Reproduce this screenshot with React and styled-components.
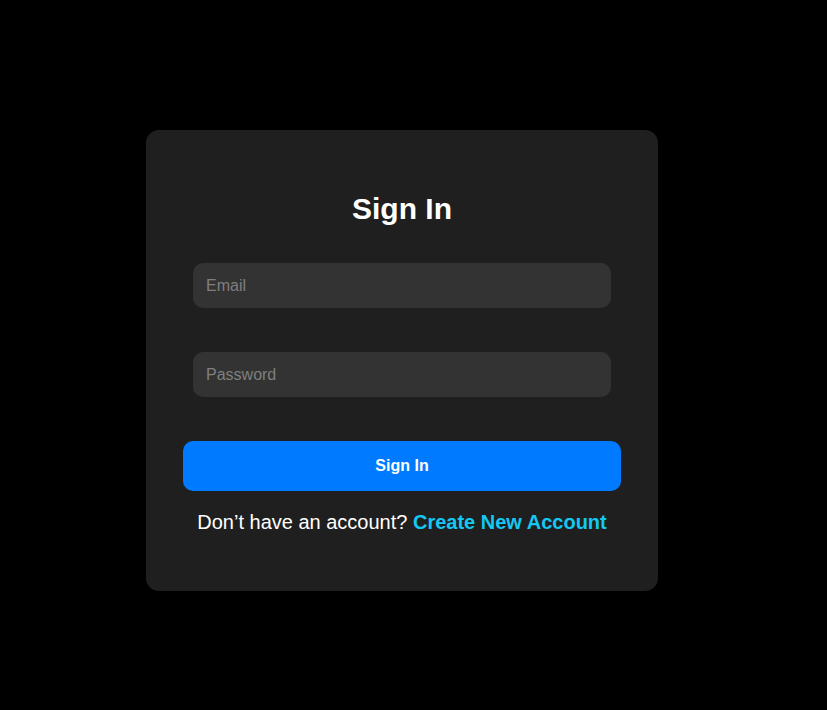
import React from "react";
import styled, { createGlobalStyle } from "styled-components";

const GlobalStyle = createGlobalStyle`
  html, body {
    margin: 0;
    padding: 0;
    background: #000;
    font-family: "Liberation Sans", Arial, sans-serif;
  }
`;

const Page = styled.div`
  min-height: 710px;
  box-sizing: border-box;
  padding: 130px 0 0 146px;
`;

const Card = styled.div`
  width: 512px;
  box-sizing: border-box;
  background: #1f1f1f;
  border-radius: 13px;
  padding: 40px 37px 57px;
`;

const Title = styled.h2`
  margin: 22px 0 37px;
  color: #fff;
  font-size: 30px;
  font-weight: 700;
  text-align: center;
  line-height: 34px;
`;

const Form = styled.form`
  display: flex;
  flex-direction: column;
  gap: 44px;
`;

const Input = styled.input`
  margin: 0 10px;
  height: 45px;
  box-sizing: border-box;
  padding: 0 13px;
  border: none;
  outline: none;
  border-radius: 10px;
  background: #333;
  color: #fff;
  font-family: inherit;
  font-size: 16px;
  &::placeholder {
    color: #7f7f7f;
  }
`;

const Button = styled.button`
  height: 50px;
  border: none;
  border-radius: 10px;
  background: #007bff;
  color: #fff;
  font-family: inherit;
  font-size: 16px;
  font-weight: 700;
  cursor: pointer;
`;

const Footer = styled.p`
  margin: 20px 0 0;
  color: #fff;
  font-size: 20px;
  line-height: 23px;
  text-align: center;
`;

const Link = styled.a`
  color: #13c8f2;
  font-weight: 700;
  text-decoration: none;
  cursor: pointer;
`;

export default function App() {
  return (
    <>
      <GlobalStyle />
      <Page>
        <Card>
          <Title>Sign In</Title>
          <Form onSubmit={(e) => e.preventDefault()}>
            <Input type="email" placeholder="Email" />
            <Input type="password" placeholder="Password" />
            <Button type="submit">Sign In</Button>
          </Form>
          <Footer>
            Don’t have an account? <Link>Create New Account</Link>
          </Footer>
        </Card>
      </Page>
    </>
  );
}
